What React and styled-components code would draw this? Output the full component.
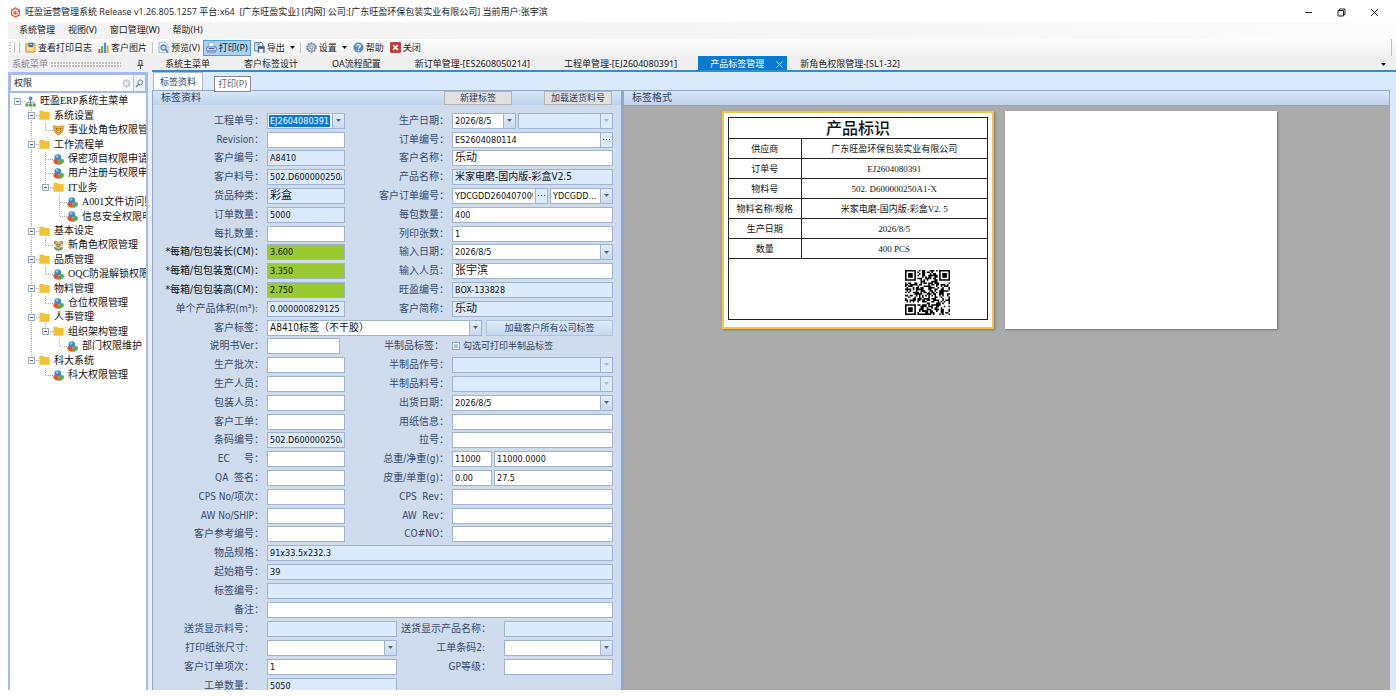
import React, { useId } from "react";
import styled, { createGlobalStyle, css } from "styled-components";

const ui = `"Noto Sans", "Noto Sans CJK SC", sans-serif`;
const formFont = `"DejaVu Sans Condensed", "Noto Sans CJK SC", sans-serif`;
const song = `"Liberation Serif", "Noto Sans CJK SC", serif`;

const MENUS = ["系统管理", "视图(V)", "窗口管理(W)", "帮助(H)"];

const TABS = [
  "系统主菜单",
  "客户标签设计",
  "OA流程配置",
  "新订单管理-[ES2608050214]",
  "工程单管理-[EJ2604080391]",
  "产品标签管理",
  "新角色权限管理-[SL1-32]",
];

const TREE = [
  {
    name: "旺盈ERP系统主菜单",
    icon: "root",
    children: [
      { name: "系统设置", children: [{ name: "事业处角色权限管", icon: "mask" }] },
      {
        name: "工作流程单",
        children: [
          { name: "保密项目权限申请", icon: "cube" },
          { name: "用户注册与权限申", icon: "cube" },
          {
            name: "IT业务",
            children: [
              { name: "A001文件访问则", icon: "cube" },
              { name: "信息安全权限申", icon: "cube" },
            ],
          },
        ],
      },
      { name: "基本设定", children: [{ name: "新角色权限管理", icon: "bear" }] },
      { name: "品质管理", children: [{ name: "OQC防混解锁权限", icon: "cube" }] },
      { name: "物料管理", children: [{ name: "仓位权限管理", icon: "cube" }] },
      {
        name: "人事管理",
        children: [{ name: "组织架构管理", children: [{ name: "部门权限维护", icon: "cube" }] }],
      },
      { name: "科大系统", children: [{ name: "科大权限管理", icon: "cube" }] },
    ],
  },
];

// left and right halves of every two-column row
const ROWS = [
  [
    { label: "工程单号：", type: "picked", value: "EJ2604080391" },
    { label: "生产日期：", type: "split", left: 64, parts: [{ type: "combo", value: "2026/8/5" }, { type: "combo", disabled: true }] },
  ],
  [{ label: "Revision：" }, { label: "订单编号：", type: "lookup", value: "ES2604080114" }],
  [{ label: "客户编号：", value: "A8410", tone: "read" }, { label: "客户名称：", value: "乐动", big: true }],
  [
    { label: "客户料号：", value: "502.D600000250A1-X", tone: "read" },
    { label: "产品名称：", value: "米家电磨-国内版-彩盒V2.5", tone: "read", mid: true },
  ],
  [
    { label: "货品种类：", value: "彩盒", tone: "read", big: true },
    {
      label: "客户订单编号：",
      type: "split",
      left: 96,
      parts: [{ type: "lookup", value: "YDCGDD2604070095" }, { type: "combo", value: "YDCGDD..." }],
    },
  ],
  [{ label: "订单数量：", value: "5000", tone: "read" }, { label: "每包数量：", value: "400" }],
  [{ label: "每扎数量：" }, { label: "列印张数：", value: "1" }],
  [
    { label: "*每箱/包包装长(CM)：", value: "3.600", tone: "green", must: true },
    { label: "输入日期：", type: "combo", value: "2026/8/5" },
  ],
  [
    { label: "*每箱/包包装宽(CM)：", value: "3.350", tone: "green", must: true },
    { label: "输入人员：", value: "张宇滨", big: true },
  ],
  [
    { label: "*每箱/包包装高(CM)：", value: "2.750", tone: "green", must: true },
    { label: "旺盈编号：", value: "BOX-133828", tone: "read" },
  ],
  [
    { label: "单个产品体积(m³):", value: "0.000000829125", tone: "read", inset: 9 },
    { label: "客户简称：", value: "乐动", tone: "read", big: true },
  ],
  [{ label: "客户标签：", type: "tag", value: "A8410标签（不干胶）", span: true }],
  [{ label: "说明书Ver：", short: true }, { label: "半制品标签：", type: "check", inset: 8 }],
  [{ label: "生产批次：" }, { label: "半制品作号：", type: "combo", disabled: true }],
  [{ label: "生产人员：" }, { label: "半制品料号：", type: "combo", disabled: true }],
  [{ label: "包装人员：" }, { label: "出货日期：", type: "combo", value: "2026/8/5" }],
  [{ label: "客户工单：" }, { label: "用纸信息：" }],
  [{ label: "条码编号：", value: "502.D600000250A1-X", tone: "read" }, { label: "拉号：" }],
  [
    { label: "EC     号：" },
    { label: "总重/净重(g)：", type: "split", left: 40, parts: [{ value: "11000" }, { value: "11000.0000" }] },
  ],
  [
    { label: "QA  签名：" },
    { label: "皮重/单重(g)：", type: "split", left: 40, parts: [{ value: "0.00" }, { value: "27.5" }] },
  ],
  [{ label: "CPS No/项次：" }, { label: "CPS  Rev：" }],
  [{ label: "AW No/SHIP：" }, { label: "AW  Rev：" }],
  [{ label: "客户参考编号：" }, { label: "CO#NO：" }],
  [{ label: "物品规格：", value: "91x33.5x232.3", tone: "read", span: true }],
  [{ label: "起始箱号：", value: "39", tone: "read", span: true }],
  [{ label: "标签编号：", tone: "read", span: true }],
  [{ label: "备注：", span: true }],
];

const FOOT_ROWS = [
  [{ label: "送货显示料号：", tone: "read", inset: 13 }, { label: "送货显示产品名称：", tone: "read", inset: 13 }],
  [{ label: "打印纸张尺寸:", type: "combo", inset: 19 }, { label: "工单条码2:", type: "combo", inset: 19 }],
  [{ label: "客户订单项次：", value: "1", inset: 13 }, { label: "GP等级：", inset: 13 }],
  [{ label: "工单数量：", value: "5050", tone: "read", inset: 13 }],
];

const LABEL_ROWS = [
  ["供应商", "广东旺盈环保包装实业有限公司"],
  ["订单号", "EJ2604080391"],
  ["物料号", "502. D600000250A1-X"],
  ["物料名称/规格", "米家电磨-国内版-彩盒V2. 5"],
  ["生产日期", "2026/8/5"],
  ["数量", "400 PCS"],
];

/* ---------- icons ---------- */

const Svg = ({ size = 11, box = 16, children }) => (
  <svg width={size} height={size} viewBox={`0 0 ${box} ${box}`} aria-hidden="true">
    {children}
  </svg>
);

const LogoIcon = () => (
  <Svg size={11}>
    <path d="M8 0.5 14.5 4v8L8 15.5 1.5 12V4z" fill="#e8502f" />
    <path d="M1.5 4 8 0.5 14.5 4 11 6 8 4.2 4.8 6z" fill="#f47a55" />
    <path d="M4 6.6 8 4.6l3.4 1.8M4 6.6v3.6l4 2.2 4-2.2V8H8.4" fill="none" stroke="#fff" strokeWidth="1.7" />
  </Svg>
);

const toolIcons = {
  log: (
    <>
      <rect x="1" y="2" width="13.5" height="13" rx="1" fill="#f5bd55" stroke="#c98a2c" />
      <path d="M3 5h10v8H3z" fill="#ffe49a" />
      <path d="M5 1h7v6.5H5z" fill="#3d6fae" />
      <path d="M6.500 2.500h4v2h-4z" fill="#9cc3ea" />
    </>
  ),
  chart: (
    <>
      <rect x="0.5" y="10" width="3" height="6" fill="#e0574a" />
      <rect x="4.5" y="6" width="3" height="10" fill="#5bae62" />
      <rect x="8.5" y="1" width="3.4" height="15" fill="#4b8fd6" />
      <rect x="12.7" y="5" width="3" height="11" fill="#f0a83c" />
    </>
  ),
  preview: (
    <>
      <path d="M1.5 0.5h9l4 4v11h-13z" fill="#f4f9ff" stroke="#6c9cc9" />
      <circle cx="8" cy="8" r="3.8" fill="#bfe0fa" stroke="#4179b5" strokeWidth="1.5" />
      <path d="M11 11l3.5 3.8" stroke="#4179b5" strokeWidth="2.2" />
    </>
  ),
  print: (
    <>
      <path d="M4 0.8h8v7H4z" fill="#fff" stroke="#7a95c5" />
      <rect x="0.8" y="7" width="14.4" height="6" rx="2" fill="#d5dff2" stroke="#4d69ad" strokeWidth="1.3" />
      <path d="M3 13.5h10l1 2H2z" fill="#fff" stroke="#4d69ad" />
      <path d="M4 9.5h8" stroke="#31519c" strokeWidth="1.4" />
    </>
  ),
  save: (
    <>
      <path d="M1 0.8h10l2 2V13H1z" fill="#e4ecf7" stroke="#54709c" strokeWidth="1.3" />
      <path d="M3.5 1h5v4h-5z" fill="#9fb7d8" />
      <rect x="5.5" y="6" width="10" height="9.5" fill="#3f5f96" />
      <rect x="7.5" y="10" width="6" height="5.5" fill="#fff" />
    </>
  ),
  gear: (
    <>
      <circle cx="8" cy="8" r="6.4" fill="none" stroke="#71839f" strokeWidth="2.6" strokeDasharray="2.5 1.5" />
      <circle cx="8" cy="8" r="5.2" fill="#dbe4f0" stroke="#71839f" strokeWidth="1.2" />
      <circle cx="8" cy="8" r="2.1" fill="#fff" stroke="#5a6c8c" strokeWidth="1.3" />
    </>
  ),
  help: (
    <>
      <circle cx="8" cy="8" r="7.3" fill="#5b8bd3" stroke="#a5bce0" strokeWidth="1.2" />
      <path d="M5.5 6.2c0-3.3 5.2-3.2 5.1-.2 0 1.8-2.4 1.8-2.4 3.8" fill="none" stroke="#fff" strokeWidth="1.8" />
      <circle cx="8.1" cy="12.2" r="1.1" fill="#fff" />
    </>
  ),
  close: (
    <>
      <rect x="0.6" y="0.6" width="14.8" height="14.8" rx="1" fill="#cf3434" stroke="#8e2020" />
      <path d="M4.5 4.5l7 7M11.5 4.5l-7 7" stroke="#fff" strokeWidth="2.4" />
    </>
  ),
};

const treeIcons = {
  root: (
    <>
      <path d="M8 5v4M3 12V9h10v3M8 9v3" stroke="#667" fill="none" />
      <rect x="5.5" y="1" width="5" height="5" fill="#4a90d9" />
      <rect x="0.5" y="11" width="4.4" height="4.4" fill="#5aa84c" />
      <rect x="5.8" y="11" width="4.4" height="4.4" fill="#5aa84c" />
      <rect x="11.1" y="11" width="4.4" height="4.4" fill="#5aa84c" />
    </>
  ),
  folder: <path d="M0.5 1h6l1.5 2h7.5v11h-15z" fill="#f2c230" />,
  cube: (
    <>
      <circle cx="7" cy="5" r="4.8" fill="#3b86c4" />
      <circle cx="6" cy="3.6" r="2" fill="#8fc4ea" />
      <path d="M0.5 8.5c3-1.5 6-.5 8 2v5c-4 0-7-2-8-4z" fill="#e5532d" />
      <path d="M8.5 10.500 12 7l3.700 1.500v4L11 15.500H8.500z" fill="#4fb04a" />
    </>
  ),
  mask: (
    <>
      <path d="M1 1c4 1.5 10 1.5 14 0 .6 7-2 12-7 13.5C3 13 .4 8 1 1z" fill="#f0b02e" stroke="#c07d16" />
      <path d="M4 5.5h2.6M9.4 5.5H12" stroke="#6b3d08" strokeWidth="1.6" />
      <path d="M4.5 8.5h7c-1 3.5-6 3.5-7 0z" fill="#fff" stroke="#8c5010" />
    </>
  ),
  bear: (
    <>
      <circle cx="4" cy="4" r="3" fill="#b08850" />
      <circle cx="12" cy="4" r="3" fill="#b08850" />
      <circle cx="8" cy="7" r="5" fill="#d9b679" />
      <path d="M1 10c3 0 5 1 7 3 2-2 4-3 7-3-1 4-4 5.5-7 5.5S2 14 1 10z" fill="#5f9e4b" />
      <circle cx="6" cy="6.5" r="0.9" fill="#432" />
      <circle cx="10" cy="6.5" r="0.9" fill="#432" />
      <path d="M6.5 9h3" stroke="#7a3b20" strokeWidth="1.2" />
    </>
  ),
};

const Caret = ({ color = "#56647c" }) => (
  <svg width="5" height="3" viewBox="0 0 5 3" aria-hidden="true">
    <path d="M0 0h5L2.5 3z" fill={color} />
  </svg>
);

const QR_SIZE = 29;

const inFinder = (x, y) =>
  [[0, 0], [QR_SIZE - 7, 0], [0, QR_SIZE - 7]].find(([fx, fy]) => x >= fx - 1 && x <= fx + 7 && y >= fy - 1 && y <= fy + 7);

const qrPath = () => {
  let seed = 50260;
  let d = "";
  for (let y = 0; y < QR_SIZE; y++) {
    for (let x = 0; x < QR_SIZE; x++) {
      seed = (seed * 1103515245 + 12345) % 2147483648;
      const finder = inFinder(x, y);
      let on = seed / 2147483648 > 0.48;
      if (finder) {
        const ring = Math.max(Math.abs(x - finder[0] - 3), Math.abs(y - finder[1] - 3));
        on = ring === 3 || ring < 2;
      }
      if (on) d += `M${x} ${y}h1v1h-1z`;
    }
  }
  return d;
};

const QrCode = () => (
  <svg width="45" height="45" viewBox={`0 0 ${QR_SIZE} ${QR_SIZE}`} role="img" aria-label="QR">
    <path d={qrPath()} fill="#000" />
  </svg>
);

/* ---------- parts ---------- */

function Control({ id, field }) {
  const { type, value = "", tone, big, mid, disabled, short, label } = field;

  if (type === "combo" || type === "tag") {
    const combo = (
      <Box $tone={disabled ? "read" : tone} $grow>
        <Select id={id} aria-label={label || "选择"} defaultValue={value} disabled={disabled} $mid={type === "tag"}>
          <option>{value}</option>
        </Select>
        <BoxArrow $off={disabled}>
          <Caret color={disabled ? "#a9b8ce" : undefined} />
        </BoxArrow>
      </Box>
    );
    if (type === "combo") return combo;
    return (
      <>
        {combo}
        <LoadButton type="button">加载客户所有公司标签</LoadButton>
      </>
    );
  }
  if (type === "picked") {
    return (
      <Box $grow>
        <PickedInput id={id} defaultValue={value} />
        <BoxArrow>
          <Caret />
        </BoxArrow>
      </Box>
    );
  }
  if (type === "lookup") {
    return (
      <Box $grow>
        <Input id={id} aria-label={label || "编号"} defaultValue={value} />
        <MoreButton type="button" aria-label="更多">
          <svg width="7" height="2" viewBox="0 0 7 2">
            <path d="M0 0h1v1H0zM3 0h1v1H3zM6 0h1v1H6z" fill="#33435e" />
          </svg>
        </MoreButton>
      </Box>
    );
  }
  if (type === "split") {
    return (
      <Split $left={field.left}>
        <Control id={id} field={field.parts[0]} />
        <Control field={field.parts[1]} />
      </Split>
    );
  }
  if (type === "check") {
    return (
      <CheckLabel>
        <Check id={id} type="checkbox" />
        勾选可打印半制品标签
      </CheckLabel>
    );
  }
  return (
    <Box $tone={tone} $grow={!short} $short={short}>
      <Input id={id} aria-label={label || "重量"} defaultValue={value} readOnly={tone === "read"} $big={big} $mid={mid} />
    </Box>
  );
}

function Field({ field }) {
  const id = useId();
  return (
    <>
      <Label htmlFor={id} $must={field.must} $inset={field.inset}>
        {field.label}
      </Label>
      <Cell $span={field.span}>
        <Control id={id} field={field} />
      </Cell>
    </>
  );
}

const renderTree = (nodes, trail = []) =>
  nodes.flatMap((node, i) => {
    const last = i === nodes.length - 1;
    const root = trail.length === 0;
    return [
      <TreeRow key={node.name}>
        {trail.map((open, n) => (
          <Guide key={n} $line={open ? "full" : "none"} />
        ))}
        <Guide $line={root ? "none" : last ? "half" : "full"} $branch>
          {node.children && <Toggle type="button" aria-label="折叠" />}
        </Guide>
        <Svg size={11}>{treeIcons[node.icon || "folder"]}</Svg>
        <TreeText>{node.name}</TreeText>
      </TreeRow>,
      ...(node.children ? renderTree(node.children, [...trail, !last]) : []),
    ];
  });

const Tool = ({ icon, children, active, drop }) => (
  <ToolButton type="button" $active={active}>
    <Svg>{toolIcons[icon]}</Svg>
    {children}
    {drop && (
      <Drop>
        <Caret color="#111" />
      </Drop>
    )}
  </ToolButton>
);

function App() {
  return (
    <Shell>
      <GlobalStyle />
      <TitleBar>
        <LogoIcon />
        <Title>
          旺盈运营管理系统 Release v1.26.805.1257 平台:x64&nbsp; [广东旺盈实业] [内网] 公司:[广东旺盈环保包装实业有限公司] 当前用户:张宇滨
        </Title>
        <WinButton type="button" aria-label="最小化">
          <svg width="9" height="9" viewBox="0 0 9 9"><path d="M1 4.5h7" stroke="#222" /></svg>
        </WinButton>
        <WinButton type="button" aria-label="还原">
          <svg width="9" height="9" viewBox="0 0 9 9" fill="none" stroke="#222">
            <path d="M1 2.5h5.5V8H1zM2.5 2.5v-1.5H8v5.5H6.5" />
          </svg>
        </WinButton>
        <WinButton type="button" aria-label="关闭窗口">
          <svg width="9" height="9" viewBox="0 0 9 9"><path d="M1 1l7 7M8 1L1 8" stroke="#222" /></svg>
        </WinButton>
      </TitleBar>

      <MenuBar>
        {MENUS.map((m) => (
          <MenuItem key={m} type="button">{m}</MenuItem>
        ))}
      </MenuBar>

      <ToolBar>
        <Grip />
        <Sep />
        <Sep />
        <Tool icon="log">查看打印日志</Tool>
        <Tool icon="chart">客户图片</Tool>
        <Sep />
        <Tool icon="preview">预览(V)</Tool>
        <Tool icon="print" active>打印(P)</Tool>
        <Tool icon="save" drop>导出</Tool>
        <Sep />
        <Tool icon="gear" drop>设置</Tool>
        <Tool icon="help">帮助</Tool>
        <Tool icon="close">关闭</Tool>
        <BarEnd />
      </ToolBar>

      <Body>
        <Side>
          <SideHead>
            系统菜单
            <Dots />
            <svg width="7" height="9" viewBox="0 0 7 9" fill="none" stroke="#555">
              <path d="M2 0.5h3v4.5H2zM0.5 5.5h6M3.5 5.5V9" />
            </svg>
          </SideHead>
          <SideBox>
            <Search>
              <SearchInput aria-label="搜索菜单" defaultValue="权限" />
              <Svg size={9}>
                <circle cx="8" cy="8" r="7.5" fill="#c9ced6" />
                <path d="M5 5l6 6M11 5l-6 6" stroke="#fff" strokeWidth="2" />
              </Svg>
              <SearchButton type="button" aria-label="搜索">
                <Svg size={9}>
                  <circle cx="9.5" cy="6" r="4.3" fill="none" stroke="#56719c" strokeWidth="1.5" />
                  <path d="M6.5 9.5L1.5 14.5" stroke="#56719c" strokeWidth="2" />
                </Svg>
              </SearchButton>
            </Search>
            <Tree>{renderTree(TREE)}</Tree>
          </SideBox>
        </Side>

        <Main>
          <TabBar>
            {TABS.map((t) => {
              const active = t === "产品标签管理";
              return (
                <Tab key={t} type="button" $active={active}>
                  {t}
                  {active && (
                    <svg width="7" height="7" viewBox="0 0 7 7"><path d="M0.5 0.5l6 6M6.5 0.5l-6 6" stroke="#fff" /></svg>
                  )}
                </Tab>
              );
            })}
            <TabMore type="button" aria-label="更多标签页">
              <Caret color="#111" />
            </TabMore>
          </TabBar>
          <Page>
            <SubTabs>
              <SubTab type="button">标签资料</SubTab>
              <Tooltip role="tooltip">打印(P)</Tooltip>
            </SubTabs>
            <Panels>
              <FormPanel>
                <PanelHead>
                  标签资料
                  <HeadActions>
                    <GrayButton type="button">新建标签</GrayButton>
                    <GrayButton type="button">加载送货料号</GrayButton>
                  </HeadActions>
                </PanelHead>
                <FormGrid $left={78}>
                  {ROWS.flat().map((f) => (
                    <Field key={f.label} field={f} />
                  ))}
                </FormGrid>
                <FormGrid $left={130} $foot>
                  {FOOT_ROWS.flat().map((f) => (
                    <Field key={f.label} field={f} />
                  ))}
                </FormGrid>
              </FormPanel>

              <PreviewPanel>
                <PanelHead>标签格式</PanelHead>
                <Canvas>
                  <Sheet $current>
                    <LabelFrame>
                      <LabelTable>
                        <caption>产品标识</caption>
                        <tbody>
                          {LABEL_ROWS.map(([k, v]) => (
                            <tr key={k}>
                              <th scope="row">{k}</th>
                              <td>{v}</td>
                            </tr>
                          ))}
                        </tbody>
                      </LabelTable>
                      <QrArea>
                        <QrCode />
                      </QrArea>
                    </LabelFrame>
                  </Sheet>
                  <Sheet />
                </Canvas>
              </PreviewPanel>
            </Panels>
          </Page>
        </Main>
      </Body>
    </Shell>
  );
}

export default App;

const GlobalStyle = createGlobalStyle`
  * {
    box-sizing: border-box;
  }
  body {
    margin: 0;
    background: #fff;
  }
  button, input, select {
    margin: 0;
    padding: 0;
    border: 0;
    background: none;
    font: inherit;
    color: inherit;
    border-radius: 0;
    outline: none;
  }
  svg {
    flex: none;
    display: block;
  }
`;

const Shell = styled.div`
  display: flex;
  flex-direction: column;
  height: calc(100vh - 8px);
  margin-left: 8px;
  overflow: hidden;
  font: 9px/12px ${ui};
  color: #1a1a1a;
`;

const TitleBar = styled.header`
  display: flex;
  align-items: center;
  height: 22px;
  padding: 2px 5px 0 2px;
  flex: none;
`;

const Title = styled.div`
  flex: 1;
  margin-left: 4px;
  white-space: nowrap;
  font-family: "Open Sans", Roboto, "Noto Sans CJK SC", sans-serif;
`;

const WinButton = styled.button`
  display: flex;
  justify-content: center;
  width: 33px;
`;

const MenuBar = styled.nav`
  display: flex;
  gap: 13px;
  height: 17px;
  padding-left: 11px;
  flex: none;
  background: linear-gradient(90deg, #f3f3f3, #f6f6f6 60%, #fcfcfc);
`;

const MenuItem = styled.button`
  height: 15px;
  white-space: nowrap;
`;

const ToolBar = styled.div`
  display: flex;
  align-items: center;
  height: 17px;
  padding-left: 1px;
  flex: none;
  background: linear-gradient(#fdfdfd, #f1f1f1);
`;

const Grip = styled.i`
  width: 2px;
  height: 12px;
  margin-right: 1px;
  background: repeating-linear-gradient(#b5b5b5 0 1px, transparent 1px 3px);
`;

const Sep = styled.i`
  width: 1px;
  height: 11px;
  margin: 0 2px;
  background: #c4c4c4;
`;

const BarEnd = styled.i`
  width: 1px;
  height: 17px;
  margin: 0 4px 0 auto;
  background: #bdbdbd;
`;

const ToolButton = styled.button`
  display: flex;
  align-items: center;
  gap: 2px;
  height: 16px;
  padding: 0 2px;
  border: 1px solid ${(p) => (p.$active ? "#4a9ede" : "transparent")};
  background: ${(p) => (p.$active ? "#a9d3f6" : "none")};
  white-space: nowrap;
`;

const Drop = styled.span`
  margin-left: 3px;
`;

const Body = styled.div`
  display: flex;
  flex: 1;
  min-height: 0;
  background: #efefef;
`;

const Side = styled.aside`
  display: flex;
  flex-direction: column;
  width: 140px;
  margin-right: 4px;
  flex: none;
`;

const SideHead = styled.div`
  display: flex;
  align-items: center;
  justify-content: space-between;
  height: 16px;
  padding: 0 4px;
  white-space: nowrap;
  color: #8a8a8a;
`;

const Dots = styled.i`
  width: 70px;
  height: 5px;
  margin-right: 14px;
  background: radial-gradient(circle at 1px 1px, #c2c2c2 1px, transparent 1px) 0 0 / 3px 3px;
`;

const SideBox = styled.div`
  flex: 1;
  border: 2px solid #a3baf7;
  border-bottom: 0;
  background: #fff;
  overflow: hidden;
`;

const Search = styled.div`
  display: flex;
  align-items: center;
  height: 18px;
  padding-left: 3px;
  border: 1px solid #a9bbda;
  outline: 1px solid #a3baf7;
`;

const SearchInput = styled.input`
  flex: 1;
  min-width: 0;
`;

const SearchButton = styled.button`
  display: flex;
  align-items: center;
  justify-content: center;
  width: 12px;
  height: 16px;
  margin-left: 2px;
  border-left: 1px solid #b5c5de;
  background: #eef4fc;
`;

const Tree = styled.div`
  display: grid;
  grid-auto-rows: 14px 15px 14px 15px 14px;
  padding: 2px 0 0 1px;
  font: 10px/14px ${song};
  color: #111;
`;

const TreeRow = styled.div`
  display: flex;
  align-items: center;
  white-space: nowrap;
`;

const Guide = styled.span`
  display: flex;
  align-items: center;
  justify-content: center;
  align-self: stretch;
  width: 14px;
  flex: none;
  background-image: repeating-linear-gradient(#a9a9a9 0 1px, transparent 1px 2px),
    repeating-linear-gradient(90deg, #a9a9a9 0 1px, transparent 1px 2px);
  background-repeat: no-repeat;
  background-position: 6px 0, 7px 50%;
  background-size: 1px ${(p) => ({ full: "100%", half: "50%", none: "0" }[p.$line])}, ${(p) => (p.$branch ? "7px 1px" : "0 0")};
`;

const Toggle = styled.button`
  width: 7px;
  height: 7px;
  margin-right: 1px;
  border: 1px solid #9aa8bb;
  background: linear-gradient(#4a5f80, #4a5f80) center / 3px 1px no-repeat #f4f6fa;
`;

const TreeText = styled.span`
  margin-left: 4px;
`;

const Main = styled.main`
  display: flex;
  flex-direction: column;
  flex: 1;
  min-width: 0;
`;

const TabBar = styled.div`
  display: flex;
  height: 16px;
  flex: none;
  border-bottom: 2px solid #2f8fcc;
`;

const Tab = styled.button`
  display: flex;
  align-items: center;
  gap: 12px;
  padding: ${(p) => (p.$active ? "2px 4px 0 12px" : "2px 21px 0 13px")};
  white-space: nowrap;
  ${(p) =>
    p.$active &&
    css`
      background: #0a7ad1;
      color: #fff;
    `}
`;

const TabMore = styled.button`
  margin: 2px 10px 0 auto;
`;

const Page = styled.div`
  display: flex;
  flex-direction: column;
  flex: 1;
  min-height: 0;
  padding-right: 6px;
  background: #dceafd;
`;

const SubTabs = styled.div`
  display: flex;
  position: relative;
  height: 18px;
  flex: none;
`;

const SubTab = styled.button`
  height: 18px;
  margin-left: 1px;
  padding: 0 6px;
  border: 1px solid #a9bddb;
  border-bottom: 0;
  background: #fff;
  color: #2c4062;
`;

const Tooltip = styled.div`
  position: absolute;
  z-index: 1;
  top: 4px;
  left: 62px;
  padding: 1px 3px;
  border: 1px solid #8a8a8a;
  background: #fff;
  color: #666;
`;

const Panels = styled.div`
  display: flex;
  flex: 1;
  min-height: 0;
`;

const FormPanel = styled.section`
  width: 471px;
  flex: none;
  border: solid #8fa8d0;
  border-width: 1px 2px 0 1px;
  background: #cfdcee;
  overflow: hidden;
`;

const PanelHead = styled.div`
  display: flex;
  align-items: center;
  justify-content: space-between;
  height: 14px;
  padding: 0 1px 0 8px;
  flex: none;
  background: linear-gradient(#d8e6f8, #bfd3ed);
  font: 10px/14px ${formFont};
  color: #2c4062;
`;

const HeadActions = styled.div`
  display: flex;
  gap: 32px;
  padding-right: 8px;
`;

const GrayButton = styled.button`
  width: 68px;
  height: 14px;
  border: 1px solid #b4b4b4;
  background: #e1e1e1;
  font-size: 9px;
  line-height: 12px;
`;

const FormGrid = styled.div`
  display: grid;
  grid-template-columns: 114px ${(p) => p.$left}px 107px 1fr;
  grid-auto-rows: ${(p) => (p.$foot ? "19px" : "19px 19px 18px 19px 19px")};
  align-items: center;
  padding: ${(p) => (p.$foot ? "0" : "6px")} 8px 0 0;
  color: #1a1a1a;
`;

const Label = styled.label`
  padding-right: ${(p) => p.$inset || 3}px;
  text-align: right;
  white-space: pre;
  font: 10px/14px ${formFont};
  color: ${(p) => (p.$must ? "#111" : "#344a70")};
`;

const Cell = styled.div`
  display: flex;
  gap: 4px;
  min-width: 0;
  ${(p) => p.$span && "grid-column: span 3;"}
`;

const tones = { read: "#dceafd", green: "#99cb31" };

const Box = styled.div`
  display: flex;
  height: 16px;
  min-width: 0;
  ${(p) => (p.$grow ? "flex: 1;" : "")}
  ${(p) => (p.$short ? "width: 73px;" : "")}
  border: 1px solid #9fb3d1;
  background: ${(p) => tones[p.$tone] || "#fff"};
`;

const inputText = css`
  flex: 1;
  width: 100%;
  min-width: 0;
  font: ${(p) => (p.$big ? 11 : p.$mid ? 10 : 9)}px/14px ${formFont};
  color: #111;
`;

const Input = styled.input`
  ${inputText}
  margin: 0 2px;
`;

const PickedInput = styled.input`
  ${inputText}
  height: 12px;
  margin: 1px 2px 1px 1px;
  padding-left: 1px;
  background: #0a78d6;
  color: #fff;
`;

const Select = styled.select`
  ${inputText}
  appearance: none;
  padding-left: 2px;
  opacity: 1;
`;

const BoxArrow = styled.span`
  display: flex;
  align-items: center;
  justify-content: center;
  width: 12px;
  flex: none;
  border-left: 1px solid #9fb3d1;
  background: ${(p) => (p.$off ? "#dceafd" : "linear-gradient(#e3edf9, #c9daef)")};
`;

const MoreButton = styled.button`
  display: flex;
  align-items: center;
  justify-content: center;
  width: 12px;
  flex: none;
  border-left: 1px solid #9fb3d1;
  background: #dceafd;
`;

const Split = styled.div`
  display: grid;
  flex: 1;
  grid-template-columns: ${(p) => p.$left}px 1fr;
  gap: 2px;
  min-width: 0;
`;

const LoadButton = styled.button`
  width: 127px;
  height: 16px;
  border: 1px solid #b0c4e0;
  background: linear-gradient(#deebfa, #c6d9f0);
  color: #2c4062;
`;

const CheckLabel = styled.label`
  display: flex;
  align-items: center;
  gap: 3px;
  white-space: nowrap;
  color: #2c4062;
`;

const Check = styled.input`
  appearance: none;
  width: 8px;
  height: 8px;
  border: 1px solid #94a9c8;
  background: #a9c8ea;
  box-shadow: inset 0 0 0 1px #e9f1fb;
`;

const PreviewPanel = styled.section`
  display: flex;
  flex-direction: column;
  flex: 1;
  min-width: 0;
  border: 1px solid #8fa8d0;
  border-bottom: 0;
`;

const Canvas = styled.div`
  display: flex;
  justify-content: center;
  align-items: flex-start;
  gap: 11px;
  flex: 1;
  padding: 5px 14px 0 0;
  border-top: 1px solid #a0a0a0;
  background: #ababab;
`;

const Sheet = styled.article`
  width: 272px;
  height: 218px;
  padding: 4px;
  border: 2px solid ${(p) => (p.$current ? "#f5c24c" : "#fff")};
  background: #fff;
  box-shadow: 1px 1px 2px #777;
`;

const LabelFrame = styled.div`
  display: flex;
  flex-direction: column;
  height: 203px;
  border: 1px solid #222;
`;

const LabelTable = styled.table`
  width: 100%;
  border-collapse: collapse;
  font: 9px/12px "Liberation Serif", "Noto Sans CJK SC", serif;
  color: #111;

  caption {
    height: 20px;
    font: 500 16px/18px "Noto Sans CJK SC", sans-serif;
  }
  tr {
    height: 20px;
  }
  th,
  td {
    padding: 0;
    border-top: 1px solid #222;
    border-bottom: 1px solid #222;
    font-weight: 400;
    text-align: center;
  }
  th {
    width: 72px;
    border-right: 1px solid #222;
  }
`;

const QrArea = styled.div`
  display: flex;
  justify-content: flex-end;
  padding: 11px 37px 0 0;
`;
